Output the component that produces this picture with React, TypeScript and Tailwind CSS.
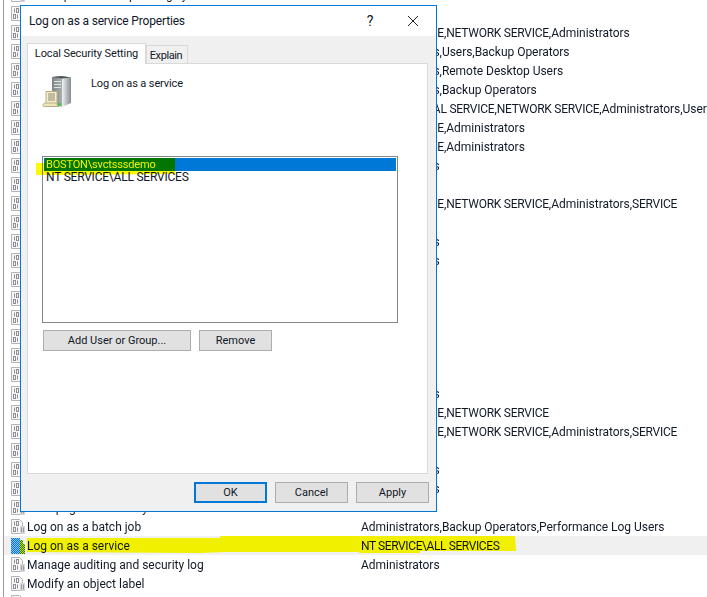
type Right = { name: string; value?: string };

const rights: Right[] = [
  { name: "Act as part of the operating system" },
  { name: "Add workstations to domain" },
  { name: "Adjust memory quotas for a process", value: "LOCAL SERVICE,NETWORK SERVICE,Administrators" },
  { name: "Allow log on locally", value: "Administrators,Users,Backup Operators" },
  { name: "Allow log on through Remote Desktop Services", value: "Administrators,Remote Desktop Users" },
  { name: "Back up files and directories", value: "Administrators,Backup Operators" },
  { name: "Bypass traverse checking", value: "Everyone,LOCAL SERVICE,NETWORK SERVICE,Administrators,Users,Backup Operators" },
  { name: "Change the system time", value: "LOCAL SERVICE,Administrators" },
  { name: "Change the time zone", value: "LOCAL SERVICE,Administrators" },
  { name: "Create a pagefile", value: "Administrators" },
  { name: "Create a token object" },
  { name: "Create global objects", value: "LOCAL SERVICE,NETWORK SERVICE,Administrators,SERVICE" },
  { name: "Create permanent shared objects" },
  { name: "Create symbolic links", value: "Administrators" },
  { name: "Debug programs", value: "Administrators" },
  { name: "Deny access to this computer from the network" },
  { name: "Deny log on as a batch job" },
  { name: "Deny log on as a service" },
  { name: "Deny log on locally" },
  { name: "Deny log on through Remote Desktop Services" },
  { name: "Enable computer and user accounts to be trusted" },
  { name: "Force shutdown from a remote system", value: "Administrators" },
  { name: "Generate security audits", value: "LOCAL SERVICE,NETWORK SERVICE" },
  { name: "Impersonate a client after authentication", value: "LOCAL SERVICE,NETWORK SERVICE,Administrators,SERVICE" },
  { name: "Increase a process working set" },
  { name: "Increase scheduling priority", value: "Administrators" },
  { name: "Load and unload device drivers", value: "Administrators" },
  { name: "Lock pages in memory" },
  { name: "Log on as a batch job", value: "Administrators,Backup Operators,Performance Log Users" },
  { name: "Log on as a service", value: "NT SERVICE\\ALL SERVICES" },
  { name: "Manage auditing and security log", value: "Administrators" },
  { name: "Modify an object label" },
  { name: "Modify firmware environment values", value: "Administrators" },
];

const SELECTED = "Log on as a service";

function PolicyIcon({ selected }: { selected?: boolean }) {
  if (selected) {
    // selected row: the icon is dithered with the highlight colour
    return (
      <svg width="14" height="16" viewBox="0 0 14 16" className="shrink-0" shapeRendering="crispEdges">
        <defs>
          <pattern id="dither-blue" width="2" height="2" patternUnits="userSpaceOnUse">
            <rect width="2" height="2" fill="#8fc0ee" />
            <rect width="1" height="1" fill="#0078d7" />
            <rect x="1" y="1" width="1" height="1" fill="#0078d7" />
          </pattern>
          <pattern id="dither-green" width="2" height="2" patternUnits="userSpaceOnUse">
            <rect width="2" height="2" fill="#c8d800" />
            <rect width="1" height="1" fill="#2f7d10" />
            <rect x="1" y="1" width="1" height="1" fill="#2f7d10" />
          </pattern>
        </defs>
        <path d="M0 0h9v16H0z" fill="url(#dither-blue)" />
        <path d="M9 2h3v4h2v10H9z" fill="url(#dither-green)" />
      </svg>
    );
  }
  return (
    <svg width="14" height="16" viewBox="0 0 14 16" className="shrink-0">
      <path d="M0.5 0.5h8l3 3v11h-11z" fill="#f7f7f8" stroke="#b4b4b8" />
      <g fill="none" stroke="#8d8d96">
        <path d="M3.5 2.5v4" />
        <rect x="5.5" y="2.5" width="2" height="4" />
        <rect x="2.5" y="8.5" width="2" height="4" />
        <path d="M6.5 8.5v4" />
      </g>
      <rect x="9" y="7" width="5" height="8" fill="#d6d6da" />
      <path d="M10.5 8.5v5M12.5 8.5v5" stroke="#9a9aa2" />
    </svg>
  );
}

function ServerIcon() {
  return (
    <svg width="30" height="33" viewBox="0 0 30 33" className="shrink-0">
      <defs>
        <linearGradient id="srv-side" x1="0" x2="1" y1="0" y2="0">
          <stop offset="0" stopColor="#f0f2f2" />
          <stop offset="1" stopColor="#868d8f" />
        </linearGradient>
        <linearGradient id="srv-front" x1="0" x2="1" y1="0" y2="0">
          <stop offset="0" stopColor="#7d8587" />
          <stop offset="1" stopColor="#a9afb0" />
        </linearGradient>
      </defs>
      <path d="M10 2 L20 1 L20 32 L10 29z" fill="url(#srv-front)" />
      <path d="M20 1 L29 2.5 L29 28 L20 32z" fill="url(#srv-side)" />
      <path d="M10 2 L20 1 L29 2.5 L20 3.5z" fill="#4c5456" />
      <path d="M12 6.5h7M12 9.5h7M12 12.5h7" stroke="#dfe3e4" strokeWidth="1.2" />
      <rect x="16" y="28" width="3" height="3" fill="#4fc04a" />
      <path d="M4 16.5h11v12H4z" fill="#f5ecc9" stroke="#b8ad84" />
      <path d="M6 19h7M6 21h7M6 23h7M6 25h7" stroke="#8d8a78" />
      <path d="M1 30.5c0-1.5 1-2.5 3-2.5h11v1c0 1.5 1 2.5 2 2.5H3c-1 0-2 0-2-1z" fill="#efe3b8" stroke="#b8ad84" />
    </svg>
  );
}

function Value({ text, tight }: { text: string; tight: boolean }) {
  const parts = text.split(/([A-Z]{2,}(?:[ \\][A-Z]{2,})*)/);
  return (
    <div className="whitespace-nowrap">
      {parts.map((p, i) =>
        i % 2 === 1 ? (
          <span key={i} className={tight ? "tracking-[-0.4px]" : "tracking-[-0.25px]"}>
            {p}
          </span>
        ) : (
          <span key={i} className="tracking-[-0.03px]">
            {p}
          </span>
        ),
      )}
    </div>
  );
}

function RightRow({ right }: { right: Right }) {
  const selected = right.name === SELECTED;
  return (
    <div className={`relative flex h-[19px] shrink-0 items-center ${selected ? "bg-[#f0f0f0]" : ""}`}>
      <div className="ml-[7px] flex w-[16px] shrink-0">
        <PolicyIcon selected={selected} />
      </div>
      <div className="w-[334px] shrink-0 truncate">{right.name}</div>
      {right.value && <Value text={right.value} tight={selected} />}
      {selected && (
        <svg width="495" height="20" viewBox="0 0 495 20" className="pointer-events-none absolute left-[21px] top-0 mix-blend-multiply">
          <path d="M2 2 L195 2 L195 0 L490 0 L491 15 L395 15 L395 17 L335 17 L333 16 L200 16 L175 17 L2 16z" fill="#ffff00" />
        </svg>
      )}
    </div>
  );
}

function DialogButton({ label, primary, className }: { label: string; primary?: boolean; className: string }) {
  return (
    <button
      className={`h-[21px] bg-[#e1e1e1] text-center text-[11px] leading-none ${primary ? "border-2 border-[#0078d7]" : "border border-[#adadad]"} ${className}`}
    >
      {label}
    </button>
  );
}

export default function App() {
  return (
    <div className="relative h-[597px] w-[707px] overflow-hidden bg-white font-['Roboto',sans-serif] text-[12px] text-[#111827]">
      <div className="-mt-[15px] ml-[3px] flex h-[612px] flex-col overflow-hidden border-l border-[#9a9a9a]">
        {rights.map((r) => (
          <RightRow key={r.name} right={r} />
        ))}
      </div>

      {/* Properties window */}
      <div className="absolute left-[20px] top-[5px] flex h-[507px] w-[417px] flex-col border border-[#0078d7] bg-[#f0f0f0]">
        <div className="flex h-[30px] shrink-0 items-center bg-white pl-[8px]">
          <span className="flex-1 tracking-[-0.17px]">Log on as a service Properties</span>
          <span className="w-[16px] text-center text-[14px]">?</span>
          <svg width="12" height="12" viewBox="0 0 12 12" className="ml-[29px] mr-[17px]">
            <path d="M1 1l10 10M11 1L1 11" stroke="#222" fill="none" />
          </svg>
        </div>

        <div className="flex h-[27px] shrink-0 items-end pl-[6px] text-[11px]">
          <div className="relative z-10 -mb-px flex h-[21px] w-[119px] items-center justify-center border border-b-0 border-[#d9d9d9] bg-white tracking-[-0.12px]">
            Local Security Setting
          </div>
          <div className="flex h-[18px] w-[42px] items-center justify-center border border-b-0 border-[#d9d9d9] bg-[#f0f0f0] pr-[2px] pt-[3px] tracking-[-0.4px]">
            Explain
          </div>
        </div>

        <div className="ml-[6px] mr-[8px] flex h-[411px] flex-col border border-[#d9d9d9] bg-white pl-[14px]">
          <div className="flex h-[92px] shrink-0 pt-[11px]">
            <ServerIcon />
            <div className="ml-[19px] mt-[1px] text-[11px] tracking-[-0.12px]">Log on as a service</div>
          </div>

          <div className="relative flex h-[167px] w-[356px] flex-col border border-[#82878c] p-px leading-[13px]">
            <div className="h-[13px] bg-[#0078d7] pl-[2px]">
              <span className="relative z-10 text-[11px] tracking-[-0.17px] text-[#f5f200]">BOSTON\svctsssdemo</span>
            </div>
            <div className="pl-[2px] tracking-[-0.22px]">NT SERVICE\ALL SERVICES</div>
            {/* yellow marker over the selected account */}
            <svg width="140" height="19" viewBox="0 0 140 19" className="pointer-events-none absolute -left-[7px] top-[1px] mix-blend-multiply">
              <path d="M0 5 L9 5 L9 0 L139 0 L139 16 L0 17z" fill="#fbfb00" />
            </svg>
          </div>

          <div className="mt-[7px] flex gap-[8px] pl-[1px]">
            <DialogButton label="Add User or Group..." className="w-[148px]" />
            <DialogButton label="Remove" className="w-[73px]" />
          </div>
        </div>

        <div className="mt-[8px] flex justify-end gap-[8px] pr-[7px]">
          <DialogButton label="OK" primary className="w-[73px]" />
          <DialogButton label="Cancel" className="w-[73px]" />
          <DialogButton label="Apply" className="w-[73px]" />
        </div>
      </div>
    </div>
  );
}
